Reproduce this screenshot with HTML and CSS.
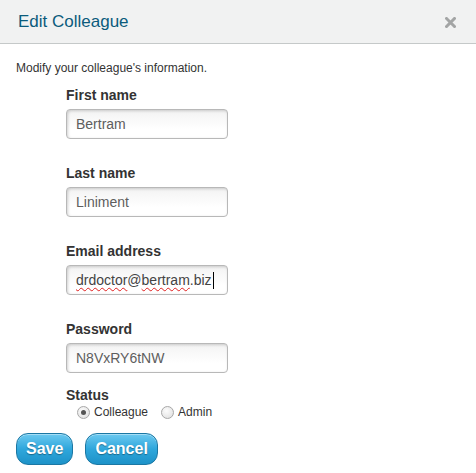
FILE: index.html
```html
<!DOCTYPE html>
<html>
<head>
<meta charset="utf-8">
<link rel="stylesheet" href="styles.css">
</head>
<body>
<div class="dialog">
  <div class="header">
    <h1 class="title">Edit Colleague</h1>
    <span class="close"><svg width="11" height="11" viewBox="0 0 11 11"><path d="M1.5 1.5 L9.5 9.5 M9.5 1.5 L1.5 9.5" stroke="#a3a5a5" stroke-width="3" stroke-linecap="square"/></svg></span>
  </div>
  <div class="body">
    <p class="intro">Modify your colleague's information.</p>
    <div class="fields">
      <div class="group">
        <label class="label">First name</label>
        <input class="input" type="text" value="Bertram">
      </div>
      <div class="group">
        <label class="label">Last name</label>
        <input class="input" type="text" value="Liniment">
      </div>
      <div class="group">
        <label class="label">Email address</label>
        <div class="input fake"><span class="spell">drdoctor</span>@<span class="spell">bertram</span>.biz<span class="caret"></span></div>
      </div>
      <div class="group">
        <label class="label">Password</label>
        <input class="input" type="text" value="N8VxRY6tNW">
      </div>
      <div class="status">
        <div class="label">Status</div>
        <div class="radios">
          <label class="radio"><span class="dot checked"></span>Colleague</label>
          <label class="radio"><span class="dot"></span>Admin</label>
        </div>
      </div>
    </div>
    <div class="buttons">
      <button class="btn">Save</button>
      <button class="btn">Cancel</button>
    </div>
  </div>
</div>
</body>
</html>
```
FILE: styles.css
```css
html, body { margin: 0; padding: 0; background: #fff; }
body { font-family: "Liberation Sans", Arial, sans-serif; color: #333; }
.dialog { width: 476px; height: 473px; overflow: hidden; }
.header {
  height: 43px;
  background: #f1f2f2;
  border-bottom: 1px solid #c5c9c9;
  display: flex;
  align-items: center;
  justify-content: space-between;
  padding: 0 20px 0 18px;
}
.title { margin: 0; font-size: 17px; font-weight: normal; color: #0b5b7c; line-height: 20px; }
.close { display: flex; margin-top: 2px; }
.body { padding: 16px 16px 0 16px; }
.intro { margin: 0; font-size: 12px; line-height: 16px; color: #333; }
.fields { padding-left: 50px; margin-top: 11px; }
.group { display: flex; flex-direction: column; align-items: flex-start; margin-bottom: 26px; }
.label { display: block; font-size: 14px; font-weight: bold; line-height: 16px; height: 16px; color: #333; margin-bottom: 6px; }
.input {
  box-sizing: border-box;
  flex: none;
  width: 162px;
  height: 30px;
  margin: 0;
  padding: 0 9px;
  border: 1px solid #b8b8b8;
  border-radius: 4px;
  background: linear-gradient(#f3f3f3, #ffffff 70%);
  box-shadow: inset 1px 1px 3px rgba(0,0,0,0.18);
  font-family: "Liberation Sans", Arial, sans-serif;
  font-size: 14px;
  color: #5e5e5e;
  outline: none;
}
.fake { display: flex; align-items: center; color: #444; white-space: nowrap; padding-right: 2px; }
.spell { text-decoration: underline wavy #e02020; text-decoration-thickness: 1px; text-underline-offset: 2px; }
.caret { display: inline-block; width: 1px; height: 17px; background: #000; margin-left: 1px; }
.status { margin-top: -12px; }
.status .label { margin-bottom: 2px; }
.radios { display: flex; gap: 13px; padding-left: 11px; }
.radio { display: flex; align-items: center; font-size: 12px; color: #333; line-height: 15px; }
.dot {
  box-sizing: border-box;
  width: 13px; height: 13px;
  border-radius: 50%;
  border: 1px solid #a8a8a8;
  background: radial-gradient(circle at 40% 35%, #fcfcfc, #dcdcdc);
  margin-right: 4px;
  display: flex; align-items: center; justify-content: center;
}
.dot.checked::after { content: ""; width: 5px; height: 5px; border-radius: 50%; background: #555; }
.buttons { display: flex; gap: 12px; margin-top: 13px; }
.btn {
  height: 32px;
  padding: 0 9px;
  border: 1px solid #1b77a3;
  border-radius: 12px;
  background: linear-gradient(#6cc9f0, #2fa7dc 50%, #1d92c8);
  box-shadow: inset 0 1px 0 rgba(255,255,255,0.4);
  color: #fff;
  font-family: "Liberation Sans", Arial, sans-serif;
  font-size: 16px;
  font-weight: bold;
  text-shadow: 0 1px 1px rgba(0,0,0,0.35);
}
```
